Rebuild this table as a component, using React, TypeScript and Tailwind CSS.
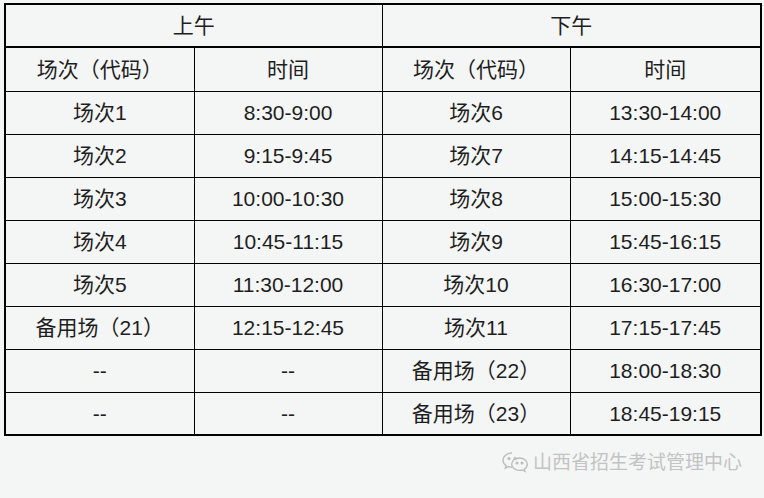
import React from "react"

const rows: [string, string, string, string][] = [
  ["场次1", "8:30-9:00", "场次6", "13:30-14:00"],
  ["场次2", "9:15-9:45", "场次7", "14:15-14:45"],
  ["场次3", "10:00-10:30", "场次8", "15:00-15:30"],
  ["场次4", "10:45-11:15", "场次9", "15:45-16:15"],
  ["场次5", "11:30-12:00", "场次10", "16:30-17:00"],
  ["备用场（21）", "12:15-12:45", "场次11", "17:15-17:45"],
  ["--", "--", "备用场（22）", "18:00-18:30"],
  ["--", "--", "备用场（23）", "18:45-19:15"],
]

const cell = "border border-black text-center align-middle p-0"

function WechatIcon() {
  return (
    <svg width="30" height="24" viewBox="0 0 30 24" fill="none" stroke="#bdbdbd" strokeWidth="1.4">
      <path d="M12 4c-5 0-9 3.2-9 7.2 0 2.2 1.2 4.1 3.1 5.4l-.8 2.6 3-1.6c1.2.4 2.4.6 3.7.6" />
      <circle cx="9" cy="9.5" r="0.9" fill="#bdbdbd" />
      <circle cx="15" cy="9.5" r="0.9" fill="#bdbdbd" />
      <path d="M19.5 9c-4.4 0-7.8 2.8-7.8 6.2s3.4 6.2 7.8 6.2c1 0 2-.2 2.9-.5l2.6 1.4-.7-2.2c1.8-1.1 3-2.9 3-4.9C27.3 11.8 23.9 9 19.5 9z" />
      <circle cx="17" cy="14" r="0.8" fill="#bdbdbd" />
      <circle cx="22" cy="14" r="0.8" fill="#bdbdbd" />
    </svg>
  )
}

export default function App() {
  return (
    <div
      className="w-[764px] h-[498px] bg-[#f4f5f5] pt-[3px] pl-[4px] text-[#1e1e1e]"
      style={{ fontFamily: '"Liberation Sans", "Noto Sans CJK SC", sans-serif' }}
    >
      <table className="table-fixed border-collapse w-[756px] border-2 border-black text-[21px] leading-none">
        <colgroup>
          <col className="w-[189px]" />
          <col className="w-[188px]" />
          <col className="w-[188px]" />
          <col className="w-[191px]" />
        </colgroup>
        <tbody>
          <tr className="h-[43px]">
            <td colSpan={2} className={`${cell} border-b-2`}>上午</td>
            <td colSpan={2} className={`${cell} border-b-2`}>下午</td>
          </tr>
          <tr className="h-[44px]">
            <td className={cell}>场次（代码）</td>
            <td className={cell}>时间</td>
            <td className={cell}>场次（代码）</td>
            <td className={cell}>时间</td>
          </tr>
          {rows.map((r, i) => (
            <tr key={i} className="h-[43px]">
              {r.map((t, j) => (
                <td key={j} className={cell}>{t}</td>
              ))}
            </tr>
          ))}
        </tbody>
      </table>
      <div className="flex justify-end items-center gap-[3px] pr-[22px] mt-[13px] text-[#c3c3c3] text-[19px] leading-[24px]">
        <WechatIcon />
        <span style={{ fontFamily: '"Noto Sans CJK SC", sans-serif' }}>山西省招生考试管理中心</span>
      </div>
    </div>
  )
}
